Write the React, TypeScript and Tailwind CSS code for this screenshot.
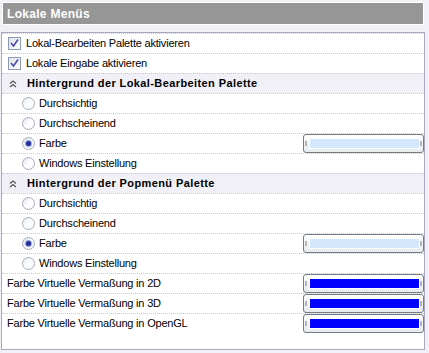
const font = { fontFamily: '"Liberation Sans", Arial, sans-serif' };

type Row =
    | { kind: 'check'; label: string }
    | { kind: 'head'; label: string }
    | { kind: 'radio'; label: string; checked?: boolean; swatch?: string }
    | { kind: 'color'; label: string; swatch: string };

const radios = (): Row[] => [
    { kind: 'radio', label: 'Durchsichtig' },
    { kind: 'radio', label: 'Durchscheinend' },
    { kind: 'radio', label: 'Farbe', checked: true, swatch: '#d3e8fc' },
    { kind: 'radio', label: 'Windows Einstellung' },
];

const rows: Row[] = [
    { kind: 'check', label: 'Lokal-Bearbeiten Palette aktivieren' },
    { kind: 'check', label: 'Lokale Eingabe aktivieren' },
    { kind: 'head', label: 'Hintergrund der Lokal-Bearbeiten Palette' },
    ...radios(),
    { kind: 'head', label: 'Hintergrund der Popmenü Palette' },
    ...radios(),
    { kind: 'color', label: 'Farbe Virtuelle Vermaßung in 2D', swatch: '#0000ff' },
    { kind: 'color', label: 'Farbe Virtuelle Vermaßung in 3D', swatch: '#0000ff' },
    { kind: 'color', label: 'Farbe Virtuelle Vermaßung in OpenGL', swatch: '#0000ff' },
];

const CheckBox = () => (
    <span className="w-[13px] h-[13px] border border-[#8c9cb0] bg-gradient-to-br from-[#dce2ea] to-white flex items-center justify-center shrink-0">
        <svg width="9" height="9" viewBox="0 0 9 9">
            <path d="M1 4 L3.5 7 L8 0.5" fill="none" stroke="#4a4aa8" strokeWidth="1.6" />
        </svg>
    </span>
);

const Radio = ({ checked }: { checked?: boolean }) => (
    <span className="w-[13px] h-[13px] rounded-full border border-[#a4b0bc] bg-gradient-to-br from-[#dfe4ea] via-white to-[#f4f6f8] flex items-center justify-center shrink-0">
        {checked && <span className="w-[5px] h-[5px] rounded-full bg-[#27309a] shadow-[0_0_1px_1px_#8ea0e0]" />}
    </span>
);

const Chevrons = () => (
    <svg width="8" height="8" viewBox="0 0 8 8" className="shrink-0">
        <path d="M1 3.5 L4 1 L7 3.5 M1 7 L4 4.5 L7 7" fill="none" stroke="#555" strokeWidth="1.2" />
    </svg>
);

const ColorButton = ({ color }: { color: string }) => (
    <div className="ml-auto w-[121px] h-[19px] rounded-[3px] border border-[#747c84] bg-gradient-to-b from-white to-[#e6eaee] relative shrink-0">
        <span className="absolute left-[1px] top-[6px] w-[2px] h-[5px] bg-[#b0b4b8]" />
        <span className="absolute right-[1px] top-[6px] w-[2px] h-[5px] bg-[#b0b4b8]" />
        <div className="absolute left-[5px] right-[3px] top-[3px] bottom-[3px] border border-white" style={{ backgroundColor: color }} />
    </div>
);

export default function App() {
    return (
        <div className="w-[429px] h-[353px] bg-[#f0f0f6] overflow-hidden text-black" style={font}>
            <div className="pt-[2px] pl-[2px]">
                <div className="w-[422px] h-[23px] bg-[#969696] border border-white flex items-center pl-[4px] text-white font-bold text-[12px] tracking-[0.3px]">
                    Lokale Menüs
                </div>
            </div>
            <div className="mt-[7px] ml-[1px] w-[424px] h-[318px] bg-white border border-[#a8a8c0]">
                {rows.map((r, i) => (
                    <div
                        key={i}
                        className={`h-[20px] border-t border-dotted border-[#c2cad6] flex items-center text-[11px] ${r.kind === 'head' ? 'bg-[#f0f0f6] font-bold tracking-[0.4px]' : 'tracking-[-0.2px]'}`}
                    >
                        {r.kind === 'check' && (
                            <div className="flex items-center gap-[5px] pl-[6px]">
                                <CheckBox />
                                <span>{r.label}</span>
                            </div>
                        )}
                        {r.kind === 'head' && (
                            <div className="flex items-center gap-[10px] pl-[7px]">
                                <Chevrons />
                                <span>{r.label}</span>
                            </div>
                        )}
                        {r.kind === 'radio' && (
                            <>
                                <div className="flex items-center gap-[4px] pl-[20px]">
                                    <Radio checked={r.checked} />
                                    <span>{r.label}</span>
                                </div>
                                {r.swatch && <ColorButton color={r.swatch} />}
                            </>
                        )}
                        {r.kind === 'color' && (
                            <>
                                <span className="pl-[5px]">{r.label}</span>
                                <ColorButton color={r.swatch} />
                            </>
                        )}
                    </div>
                ))}
            </div>
        </div>
    );
}
